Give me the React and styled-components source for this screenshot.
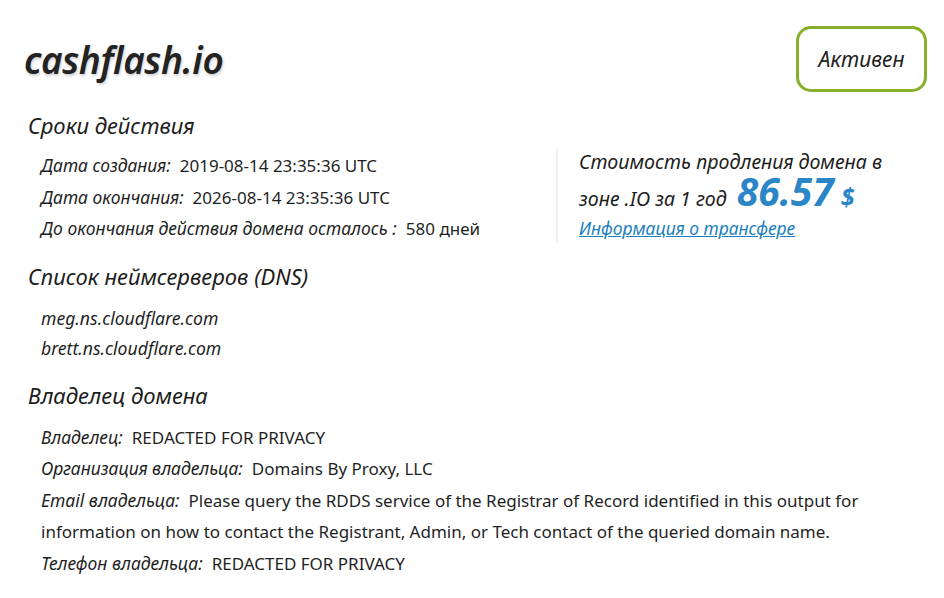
import React from "react";
import styled, { createGlobalStyle } from "styled-components";

const Global = createGlobalStyle`
  html, body { margin: 0; padding: 0; background: #fff; }
  body { font-family: "Noto Sans", "Open Sans", sans-serif; color: #1f1f1f; }
`;

const Page = styled.div`
  width: 944px;
  box-sizing: border-box;
  padding: 26px 17px 0 24px;
`;

const Header = styled.div`
  display: flex;
  justify-content: space-between;
  align-items: center;
  height: 66px;
`;

const Domain = styled.h1`
  margin: 0;
  font-size: 37px;
  font-style: italic;
  font-weight: 600;
  color: #232323;
  letter-spacing: -0.4px;
  text-shadow: 1px 2px 3px rgba(0, 0, 0, 0.18);
`;

const Badge = styled.div`
  box-sizing: border-box;
  width: 131px;
  height: 66px;
  border: 3px solid #86b02a;
  border-radius: 15px;
  display: flex;
  align-items: center;
  justify-content: center;
  font-size: 21px;
  font-style: italic;
  color: #222;
`;

const SectionTitle = styled.h2`
  margin: ${(p) => p.$mt || 0}px 0 0 4px;
  font-size: 22px;
  font-weight: 400;
  font-style: italic;
  color: #1d1d1d;
  line-height: 30px;
`;

const DatesBlock = styled.div`
  display: flex;
  align-items: flex-start;
  margin-top: 8px;
`;

const List = styled.div`
  display: flex;
  flex-direction: column;
  padding-left: 17px;
  margin-top: ${(p) => p.$mt || 0}px;
  width: ${(p) => p.$w || "auto"};
  box-sizing: border-box;
`;

const Row = styled.div`
  font-size: 17px;
  line-height: 31.5px;
  height: ${(p) => (p.$wrap ? "auto" : "31.5px")};
  color: #1f1f1f;
`;

const Label = styled.span`
  font-style: italic;
  font-size: 17.5px;
  margin-right: 9px;
`;

const NsName = styled.div`
  font-size: 17.6px;
  font-style: italic;
  line-height: 30px;
  color: #1f1f1f;
`;

const PricePanel = styled.div`
  border-left: 2px solid #efefef;
  padding-left: 21px;
  height: 95px;
  display: flex;
  flex-direction: column;
`;

const PriceText = styled.div`
  font-size: 19.6px;
  font-style: italic;
  line-height: ${(p) => p.$h}px;
  height: ${(p) => p.$h}px;
  color: #1d1d1d;
  white-space: nowrap;
`;

const Price = styled.span`
  font-size: 39px;
  font-weight: 700;
  font-style: italic;
  color: #2a86c6;
  margin-left: 10px;
  line-height: 30px;
`;

const Currency = styled.span`
  font-size: 25px;
  font-weight: 700;
  font-style: italic;
  color: #2a86c6;
  margin-left: 7px;
`;

const Link = styled.a`
  font-size: 17.5px;
  font-style: italic;
  color: #1c7fc0;
  text-decoration: underline;
  line-height: 32px;
`;

const Owner = styled.div`
  display: flex;
  flex-direction: column;
  padding-left: 17px;
  margin-top: 12px;
  width: 870px;
  box-sizing: border-box;
`;

export default function App() {
  return (
    <>
      <Global />
      <Page>
        <Header>
          <Domain>cashflash.io</Domain>
          <Badge>Активен</Badge>
        </Header>
        <SectionTitle $mt={18}>Сроки действия</SectionTitle>
        <DatesBlock>
          <List $w="532px" $mt={2}>
            <Row><Label>Дата создания:</Label>2019-08-14 23:35:36 UTC</Row>
            <Row><Label>Дата окончания:</Label>2026-08-14 23:35:36 UTC</Row>
            <Row><Label>До окончания действия домена осталось :</Label>580 дней</Row>
          </List>
          <PricePanel>
            <PriceText $h={28}>Стоимость продления домена в</PriceText>
            <PriceText $h={36}>
              зоне .IO за 1 год<Price>86.57</Price><Currency>$</Currency>
            </PriceText>
            <Link href="#">Информация о трансфере</Link>
          </PricePanel>
        </DatesBlock>
        <SectionTitle $mt={16}>Список неймсерверов (DNS)</SectionTitle>
        <List $mt={12}>
          <NsName>meg.ns.cloudflare.com</NsName>
          <NsName>brett.ns.cloudflare.com</NsName>
        </List>
        <SectionTitle $mt={17}>Владелец домена</SectionTitle>
        <Owner>
          <Row><Label>Владелец:</Label>REDACTED FOR PRIVACY</Row>
          <Row><Label>Организация владельца:</Label>Domains By Proxy, LLC</Row>
          <Row $wrap>
            <Label>Email владельца:</Label>Please query the RDDS service of the Registrar of Record identified in this output for information on how to contact the Registrant, Admin, or Tech contact of the queried domain name.
          </Row>
          <Row><Label>Телефон владельца:</Label>REDACTED FOR PRIVACY</Row>
        </Owner>
      </Page>
    </>
  );
}
